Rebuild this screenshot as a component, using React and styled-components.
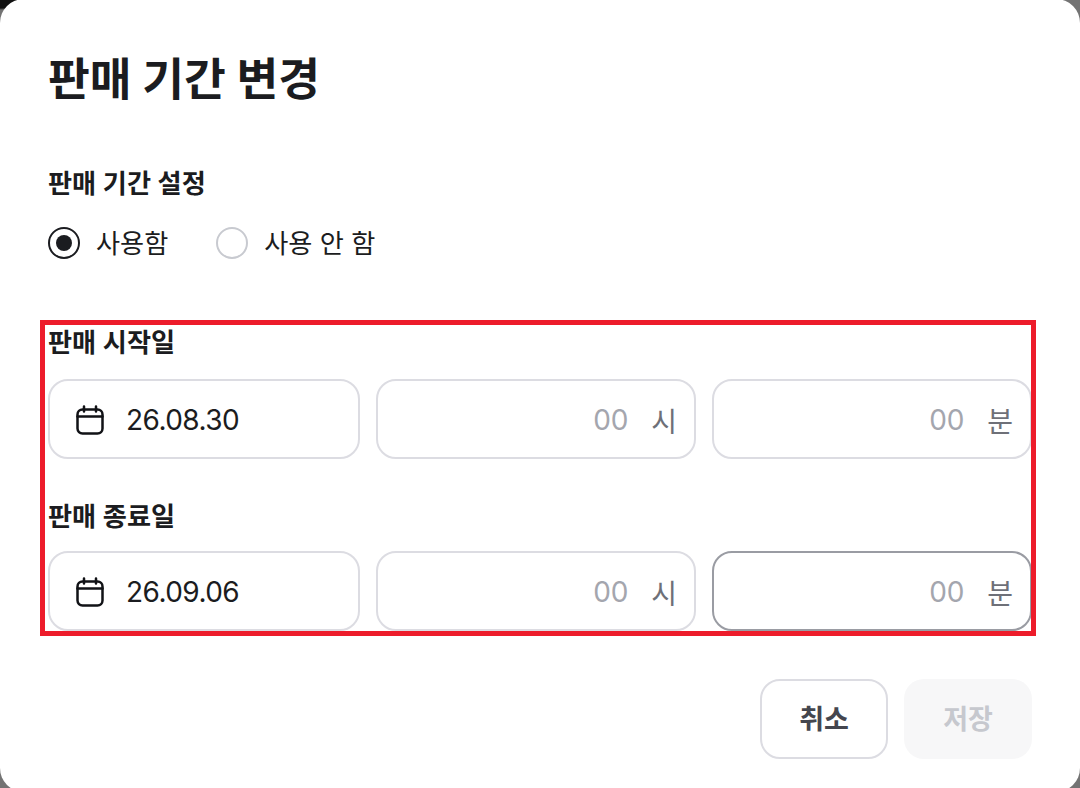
import React from "react";
import styled, { createGlobalStyle } from "styled-components";

const Global = createGlobalStyle`
  html, body { margin: 0; padding: 0; background: #737373; }
  * { box-sizing: border-box; }
  body { font-family: Inter, "Noto Sans CJK KR", sans-serif; }
`;
const Backdrop = styled.div`
  position: relative; width: 1080px; height: 788px; overflow: hidden;
  background: radial-gradient(ellipse 24px 10px at 0 0, #111 80%, #737373 100%), #737373;
`;
const Dialog = styled.div`
  width: 1080px; height: 793px; margin-top: -1px; background: #fff; border-radius: 24px; padding: 51px 48px 33px;
  display: flex; flex-direction: column; color: #1b1c20;
`;
const Title = styled.h1`
  margin: 0; font-size: 45.4px; line-height: 60px; font-weight: 700; height: 60px;
`;
const SectionLabel = styled.div`
  margin-top: 54px; font-size: 26.2px; line-height: 40px; font-weight: 600; height: 38px;
`;
const RadioRow = styled.div`
  display: flex; gap: 48px; margin-top: 25px; height: 32px;
`;
const RadioOption = styled.label`
  display: flex; align-items: center; gap: 16px; font-size: 26.2px; line-height: 32px;
`;
const RadioText = styled.span`
  padding-top: 2px;
`;
const RadioDot = styled.span`
  width: 32px; height: 32px; border-radius: 50%; flex: none; display: flex; align-items: center; justify-content: center;
  border: 2px solid ${p => (p.$on ? "#1b1c20" : "#c8cad0")};
  &::after { content: ""; width: 16px; height: 16px; border-radius: 50%; background: ${p => (p.$on ? "#1b1c20" : "transparent")}; }
`;
const FieldLabel = styled.div`
  font-size: 26.2px; line-height: 38px; height: 36px; font-weight: 600;
  margin-top: ${p => p.$mt}px;
`;
const FieldRow = styled.div`
  display: grid; grid-template-columns: 312px 320px 320px; gap: 16px; margin-top: ${p => p.$mt}px;
`;
const Field = styled.div`
  height: 80px; border-radius: 20px; border: 2px solid ${p => (p.$focus ? "#9a9ca3" : "#dcdce2")};
  display: flex; align-items: center; background: #fff; padding-top: 1px;
`;
const DateField = styled(Field)`
  padding-left: 26px; gap: 22px; font-size: 28px; letter-spacing: -0.55px;
`;
const TimeField = styled(Field)`
  justify-content: flex-end; padding-right: 17px; gap: 23px; font-size: 28px;
`;
const Placeholder = styled.span`color: #a4a6ae; letter-spacing: -0.2px;`;
const Unit = styled.span`color: #6e7078; font-size: 28px;`;
const Footer = styled.div`
  display: flex; justify-content: flex-end; gap: 16px; margin-top: auto;
`;
const Button = styled.button`
  width: 128px; height: 80px; border-radius: 20px; font: 600 27px Inter, "Noto Sans CJK KR", sans-serif;
  background: ${p => (p.$disabled ? "#f7f7f8" : "#fff")};
  color: ${p => (p.$disabled ? "#c6c8ce" : "#44464e")};
  border: ${p => (p.$disabled ? "none" : "2px solid #dcdce2")};
  padding: 0 0 3px;
`;
const Highlight = styled.div`
  position: absolute; left: 40px; top: 320px; width: 996px; height: 316px;
  border: 5px solid #ed1c2b; pointer-events: none;
`;

const Cal = () => (
  <svg width="28" height="30" viewBox="0 0 28 30" fill="none" stroke="#111216" strokeWidth="2.5" strokeLinecap="round" strokeLinejoin="round">
    <rect x="1.5" y="4.5" width="25" height="24" rx="5" />
    <path d="M1.5 11.5h25M8 1.5v5M20 1.5v5" />
  </svg>
);

const DateRow = ({ date, focus, mt }) => (
  <FieldRow $mt={mt}>
    <DateField><Cal /><span>{date}</span></DateField>
    <TimeField><Placeholder>00</Placeholder><Unit>시</Unit></TimeField>
    <TimeField $focus={focus}><Placeholder>00</Placeholder><Unit>분</Unit></TimeField>
  </FieldRow>
);

export default function App() {
  return (
    <Backdrop>
      <Global />
      <Dialog>
        <Title>판매 기간 변경</Title>
        <SectionLabel>판매 기간 설정</SectionLabel>
        <RadioRow>
          <RadioOption><RadioDot $on /><RadioText>사용함</RadioText></RadioOption>
          <RadioOption><RadioDot /><RadioText>사용 안 함</RadioText></RadioOption>
        </RadioRow>
        <FieldLabel $mt={65}>판매 시작일</FieldLabel>
        <DateRow date="26.08.30" mt={19} />
        <FieldLabel $mt={39}>판매 종료일</FieldLabel>
        <DateRow date="26.09.06" focus mt={17} />
        <Footer>
          <Button>취소</Button>
          <Button $disabled>저장</Button>
        </Footer>
      </Dialog>
      <Highlight />
    </Backdrop>
  );
}
